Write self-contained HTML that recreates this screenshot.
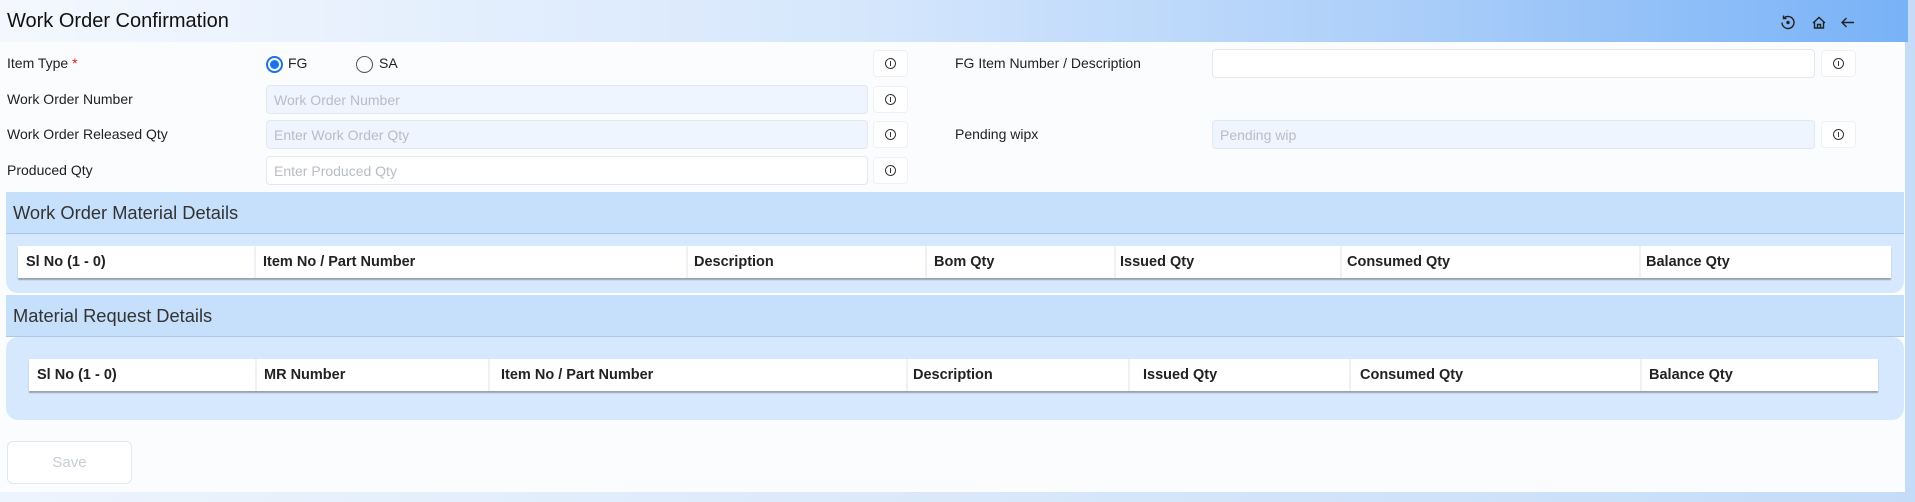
<!DOCTYPE html>
<html><head><meta charset="utf-8"><style>
*{box-sizing:border-box;margin:0;padding:0}
body{width:1915px;height:502px;overflow:hidden;background:#fbfcfe;font-family:"Liberation Sans",sans-serif;color:#222;position:relative}
.a{position:absolute}
.hdr{left:0;top:0;width:1908px;height:42px;background:linear-gradient(90deg,#f4f8fe 0%,#d6e7fc 45%,#a9cdf9 75%,#78b2f7 100%)}
.rs{left:1905px;top:0;width:10px;height:502px;background:#c5dcf8}
.bs{left:0;top:492px;width:1915px;height:10px;background:linear-gradient(90deg,#eef4fd,#c5dcf8)}
.lbl{font-size:14px;color:#222}
.inp{border:1px solid #e3e8ef;border-radius:4px;background:#eef5fe;height:29px;font-size:14px;color:#b8bcc4;padding:6px 7px}
.inp.w{background:#fff}
.info{width:35px;height:27px;border:1px solid #edf1f6;border-radius:4px;background:#fff}
.info:after{content:"";position:absolute;left:11px;top:7px;width:11px;height:11px;border:1.3px solid #333;border-radius:50%;box-sizing:border-box}
.info i{position:absolute;left:16px;top:10px;width:1.4px;height:5px;background:#333}
.sec{left:6px;width:1898px;height:42px;background:#c6e0fc;border-bottom:1.5px solid #a9c8ee;font-size:18.3px;color:#333;padding:10px 7px}
.pan{left:6px;width:1898px;background:#d6e8fd;border-radius:0 0 12px 12px}
.th{background:#fff;height:32px;box-shadow:0 2px 1px #9aa3ad;font-size:14.5px;font-weight:bold;color:#222}
.th span{position:absolute;top:8px}
.th b{position:absolute;top:0;width:2px;height:32px;background:#eef1f5}
</style></head><body>
<div class="a rs"></div>
<div class="a bs"></div>
<div class="a hdr"></div>
<div class="a" style="left:7px;top:10px;font-size:20px;color:#111">Work Order Confirmation</div>
<svg class="a" style="left:1779px;top:14px" width="80" height="17" viewBox="0 0 80 17">
<g fill="none" stroke="#222" stroke-width="1.4">
<path d="M3 8.5a6 6 0 1 0 1.8-4.3"/><path d="M4.5 1.5v3h3"/><circle cx="9" cy="8.5" r="1" fill="#222"/>
<path d="M34 9l6-5.5 6 5.5M35.5 8v6h9V8M38.5 14v-3.5h3V14"/>
<path d="M75 8.5H63M67.5 4l-4.5 4.5 4.5 4.5"/>
</g></svg>

<div class="a lbl" style="left:7px;top:55px">Item Type <span style="color:#e11">*</span></div>
<div class="a" style="left:266px;top:56px;width:17px;height:17px;border-radius:50%;border:2px solid #1a73e8"></div>
<div class="a" style="left:270px;top:60px;width:9px;height:9px;border-radius:50%;background:#1a73e8"></div>
<div class="a lbl" style="left:288px;top:55px">FG</div>
<div class="a" style="left:356px;top:56px;width:17px;height:17px;border-radius:50%;border:1.4px solid #555"></div>
<div class="a lbl" style="left:379px;top:55px">SA</div>
<div class="a info" style="left:873px;top:50px"><i></i></div>

<div class="a lbl" style="left:955px;top:55px">FG Item Number / Description</div>
<div class="a inp w" style="left:1212px;top:49px;width:603px"></div>
<div class="a info" style="left:1821px;top:50px"><i></i></div>

<div class="a lbl" style="left:7px;top:91px">Work Order Number</div>
<div class="a inp" style="left:266px;top:85px;width:602px">Work Order Number</div>
<div class="a info" style="left:873px;top:86px"><i></i></div>

<div class="a lbl" style="left:7px;top:126px">Work Order Released Qty</div>
<div class="a inp" style="left:266px;top:120px;width:602px">Enter Work Order Qty</div>
<div class="a info" style="left:873px;top:121px"><i></i></div>
<div class="a lbl" style="left:955px;top:126px">Pending wipx</div>
<div class="a inp" style="left:1212px;top:120px;width:603px">Pending wip</div>
<div class="a info" style="left:1821px;top:121px"><i></i></div>

<div class="a lbl" style="left:7px;top:162px">Produced Qty</div>
<div class="a inp w" style="left:266px;top:156px;width:602px">Enter Produced Qty</div>
<div class="a info" style="left:873px;top:157px"><i></i></div>

<div class="a sec" style="top:192px">Work Order Material Details</div>
<div class="a pan" style="top:234px;height:59px"></div>
<div class="a th" style="left:18px;top:246px;width:1873px">
<span style="left:8px">Sl No (1 - 0)</span><b style="left:236px"></b>
<span style="left:245px">Item No / Part Number</span><b style="left:668px"></b>
<span style="left:676px">Description</span><b style="left:907px"></b>
<span style="left:916px">Bom Qty</span><b style="left:1096px"></b>
<span style="left:1102px">Issued Qty</span><b style="left:1322px"></b>
<span style="left:1329px">Consumed Qty</span><b style="left:1621px"></b>
<span style="left:1628px">Balance Qty</span>
</div>

<div class="a sec" style="top:295px">Material Request Details</div>
<div class="a pan" style="top:337px;height:83px;border-radius:12px"></div>
<div class="a th" style="left:29px;top:359px;width:1849px">
<span style="left:8px">Sl No (1 - 0)</span><b style="left:226px"></b>
<span style="left:235px">MR Number</span><b style="left:459px"></b>
<span style="left:472px">Item No / Part Number</span><b style="left:877px"></b>
<span style="left:884px">Description</span><b style="left:1099px"></b>
<span style="left:1114px">Issued Qty</span><b style="left:1320px"></b>
<span style="left:1331px">Consumed Qty</span><b style="left:1611px"></b>
<span style="left:1620px">Balance Qty</span>
</div>

<div class="a" style="left:7px;top:441px;width:125px;height:43px;border:1px solid #dfe7f2;border-radius:6px;background:#fff;color:#c5cdd8;font-size:15px;text-align:center;line-height:41px">Save</div>
</body></html>
